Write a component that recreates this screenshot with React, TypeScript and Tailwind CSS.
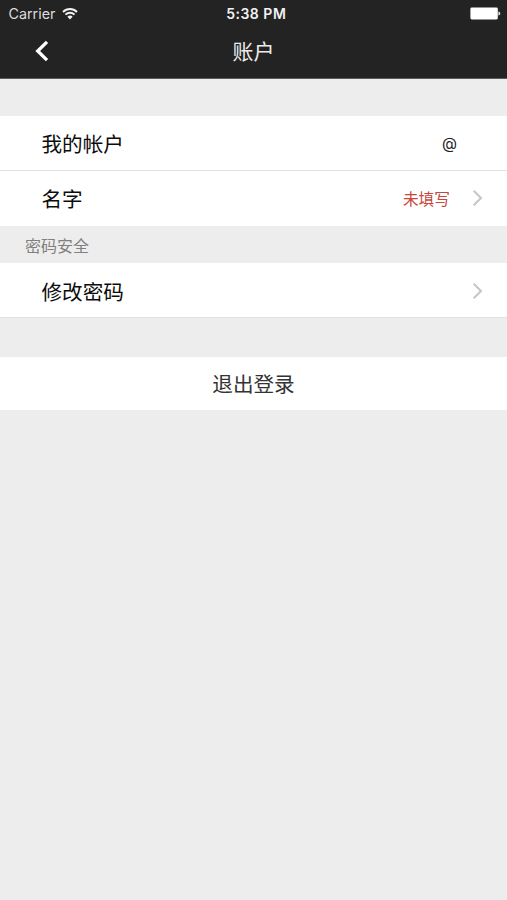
import type { ReactNode } from "react";

function WifiIcon() {
  return (
    <svg width="16" height="12" viewBox="0 0 16 12" fill="none" stroke="#f2f2f2" strokeWidth="1.8">
      <path d="M1 4C4.9 0 11.1 0 15 4" />
      <path d="M3.4 6.7C6 4.1 10 4.1 12.6 6.7" />
      <path d="M5.4 8.7C6.9 7.2 9.1 7.2 10.6 8.7L8 11.4Z" fill="#f2f2f2" stroke="none" />
    </svg>
  );
}

function Battery() {
  return (
    <svg width="31" height="13" viewBox="0 0 31 13">
      <rect x="0.4" y="0.4" width="27.4" height="12" rx="1.4" fill="#fff" />
      <path d="M28.4 4.4c1.2.3 1.9 1 1.9 2.1s-.7 1.8-1.9 2.1z" fill="#e0e0e0" />
    </svg>
  );
}

function Chevron() {
  return (
    <svg className="ml-[22px] shrink-0" width="12" height="18" viewBox="0 0 12 18" fill="none" stroke="#c7c7c9" strokeWidth="2.1">
      <path d="M1.7 1.8L9 9L1.7 16.2" />
    </svg>
  );
}

function Row({ label, className, children }: { label: string; className: string; children?: ReactNode }) {
  return (
    <div className={`flex items-center bg-white pl-[41.5px] ${className}`}>
      <span className="grow pt-[3px] text-[20.6px] leading-7 text-[#0c0c0c]">{label}</span>
      {children}
    </div>
  );
}

export default function App() {
  return (
    <div className="min-h-[900px] w-full bg-[#ededed] font-['Inter','Noto_Sans_CJK_SC',sans-serif]">
      <header className="h-[79px] border-b border-[#5c5c5c] bg-[#232323] text-white">
        <div className="grid h-[27px] grid-cols-3 items-center pr-[6px] pl-[8.5px]">
          <div className="flex items-center gap-[6.5px] text-[14.3px] text-[#dcdcdc]">
            <span>Carrier</span>
            <WifiIcon />
          </div>
          <div className="pb-px pl-[3px] text-center text-[14px] font-semibold tracking-[0.5px] text-[#f2f2f2]">5:38 PM</div>
          <div className="flex justify-end">
            <Battery />
          </div>
        </div>
        <div className="grid h-[51px] grid-cols-3 items-center">
          <svg className="mb-[3px] ml-[34px]" width="16" height="22" viewBox="0 0 16 22" fill="none" stroke="#fff" strokeWidth="3.3">
            <path d="M13 1.8L3.7 11L13 20.2" />
          </svg>
          <h1 className="pb-[2px] text-center text-[21px] leading-7 text-[#ececec]">账户</h1>
        </div>
      </header>
      <main className="pt-[37px]">
        <Row label="我的帐户" className="h-[55px] border-b border-[#e2e2e2] pr-[50px]">
          <span className="pt-px text-[15.5px] text-[#222]">@</span>
        </Row>
        <Row label="名字" className="h-[55px] pr-[23px] pb-px">
          <span className="pt-[3px] text-[15.7px] text-[#c9463c]">未填写</span>
          <Chevron />
        </Row>
        <h2 className="flex h-[37px] items-center pt-[2px] pl-[25px] text-[16px] text-[#808080]">密码安全</h2>
        <Row label="修改密码" className="h-[55px] border-b border-[#e2e2e2] pt-[3px] pr-[23px]">
          <div className="pb-[2px]">
            <Chevron />
          </div>
        </Row>
        <button className="mt-[39px] block h-[53px] w-full bg-white pt-[2px] text-center text-[20.6px] leading-7 text-[#333]">
          退出登录
        </button>
      </main>
    </div>
  );
}
